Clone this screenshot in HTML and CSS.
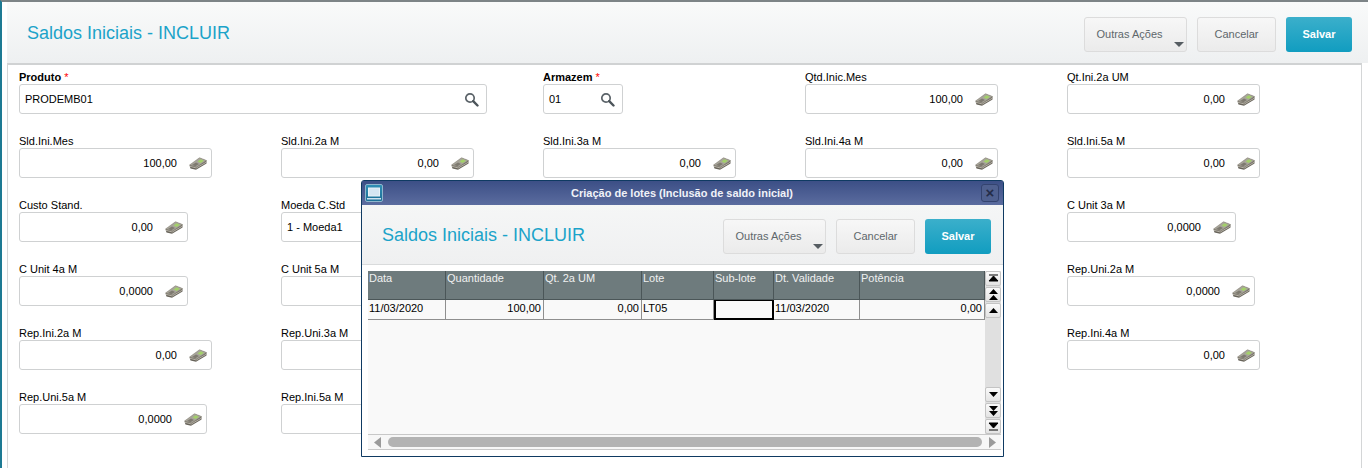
FILE: index.html
```html
<!DOCTYPE html>
<html lang="pt">
<head>
<meta charset="utf-8">
<title>Saldos Iniciais</title>
<link rel="stylesheet" href="styles.css">
</head>
<body>
<svg class="defs" width="0" height="0">
  <defs>
    <symbol id="money" viewBox="0 0 18 13">
      <path d="M0.5 8.5 L10.5 1 L17.5 3.5 L17.5 6.5 L7 12.7 L1.5 11.5 Z" fill="#67635a"/>
      <path d="M0.5 8 L10.5 0.7 L17.5 3.5 L7.5 10 Z" fill="#a8a59b" stroke="#8a867a" stroke-width=".5"/>
      <path d="M8.5 4.5 L11.5 2.3 L15 3.7 L11.7 6 Z" fill="#a3d06a"/>
      <path d="M3 8 L7 5.4 L10 6.9 L6.5 9.2 Z" fill="#7e7a70"/>
      <path d="M1 9.3 L7.3 11 L17.3 5.2" fill="none" stroke="#c9c5b9" stroke-width=".8"/>
    </symbol>
    <g id="lens">
      <circle cx="6" cy="6" r="4.2" fill="none" stroke="#5a6268" stroke-width="1.7"/>
      <path d="M9.2 9.2 L13.5 13.5" stroke="#4c545a" stroke-width="2.4" stroke-linecap="round"/>
    </g>
  </defs>
</svg>
<div class="app">
  <header class="bar">
    <h1 class="title">Saldos Iniciais - INCLUIR</h1>
    <div class="actions">
      <button class="btn btn-more">Outras Ações<i class="caret"></i></button>
      <button class="btn btn-cancel">Cancelar</button>
      <button class="btn btn-save">Salvar</button>
    </div>
  </header>
  <main class="form">
    <div class="field span2"><label class="bold">Produto <b>*</b></label><div class="box w468 left"><span>PRODEMB01</span><svg class="lens" width="15" height="15"><use href="#lens"/></svg></div></div>
    <div class="field"><label class="bold">Armazem <b>*</b></label><div class="box w80 left"><span>01</span><svg class="lens" width="15" height="15"><use href="#lens"/></svg></div></div>
    <div class="field"><label>Qtd.Inic.Mes</label><div class="box w193"><span>100,00</span><svg class="ico"><use href="#money"/></svg></div></div>
    <div class="field"><label>Qt.Ini.2a UM</label><div class="box w193"><span>0,00</span><svg class="ico"><use href="#money"/></svg></div></div>

    <div class="field"><label>Sld.Ini.Mes</label><div class="box w193"><span>100,00</span><svg class="ico"><use href="#money"/></svg></div></div>
    <div class="field"><label>Sld.Ini.2a M</label><div class="box w193"><span>0,00</span><svg class="ico"><use href="#money"/></svg></div></div>
    <div class="field"><label>Sld.Ini.3a M</label><div class="box w193"><span>0,00</span><svg class="ico"><use href="#money"/></svg></div></div>
    <div class="field"><label>Sld.Ini.4a M</label><div class="box w193"><span>0,00</span><svg class="ico"><use href="#money"/></svg></div></div>
    <div class="field"><label>Sld.Ini.5a M</label><div class="box w193"><span>0,00</span><svg class="ico"><use href="#money"/></svg></div></div>

    <div class="field"><label>Custo Stand.</label><div class="box w169"><span>0,00</span><svg class="ico"><use href="#money"/></svg></div></div>
    <div class="field"><label>Moeda C.Std</label><div class="box w193 left"><span>1 - Moeda1</span></div></div>
    <div class="field"></div>
    <div class="field"></div>
    <div class="field"><label>C Unit 3a M</label><div class="box w169"><span>0,0000</span><svg class="ico"><use href="#money"/></svg></div></div>

    <div class="field"><label>C Unit 4a M</label><div class="box w169"><span>0,0000</span><svg class="ico"><use href="#money"/></svg></div></div>
    <div class="field"><label>C Unit 5a M</label><div class="box w193"></div></div>
    <div class="field"></div>
    <div class="field"></div>
    <div class="field"><label>Rep.Uni.2a M</label><div class="box w188"><span>0,0000</span><svg class="ico"><use href="#money"/></svg></div></div>

    <div class="field"><label>Rep.Ini.2a M</label><div class="box w193"><span>0,00</span><svg class="ico"><use href="#money"/></svg></div></div>
    <div class="field"><label>Rep.Uni.3a M</label><div class="box w193"></div></div>
    <div class="field"></div>
    <div class="field"></div>
    <div class="field"><label>Rep.Ini.4a M</label><div class="box w193"><span>0,00</span><svg class="ico"><use href="#money"/></svg></div></div>

    <div class="field"><label>Rep.Uni.5a M</label><div class="box w188"><span>0,0000</span><svg class="ico"><use href="#money"/></svg></div></div>
    <div class="field"><label>Rep.Ini.5a M</label><div class="box w193"></div></div>
  </main>
</div>

<section class="dialog">
  <div class="dlg-title">
    <span class="dlg-icon"><svg width="14" height="13" viewBox="0 0 14 13"><rect x="1.5" y="1" width="11" height="8" fill="#d5e6f2" stroke="#e8f2f8"/><path d="M0 11 H14 V12.5 H0 Z" fill="#cfe2ef"/></svg></span>
    <span class="dlg-caption">Criação de lotes (Inclusão de saldo inicial)</span>
    <span class="dlg-close">×</span>
  </div>
  <div class="dlg-head">
    <h2 class="title">Saldos Iniciais - INCLUIR</h2>
    <div class="actions">
      <button class="btn btn-more">Outras Ações<i class="caret"></i></button>
      <button class="btn btn-cancel">Cancelar</button>
      <button class="btn btn-save">Salvar</button>
    </div>
  </div>
  <div class="dlg-body">
    <div class="browse">
      <div class="grid">
        <div class="th">Data</div><div class="th">Quantidade</div><div class="th">Qt. 2a UM</div><div class="th">Lote</div><div class="th">Sub-lote</div><div class="th">Dt. Validade</div><div class="th">Potência</div>
        <div class="td">11/03/2020</div><div class="td num">100,00</div><div class="td num">0,00</div><div class="td">LT05</div><div class="td focus"></div><div class="td">11/03/2020</div><div class="td num">0,00</div>
      </div>
      <div class="vscroll">
        <div class="sb-group">
          <span class="sb"><svg width="11" height="11"><path d="M1 2 H10 M5.5 3 L10 8 H1 Z" stroke="#000" fill="#000"/></svg></span>
          <span class="sb"><svg width="11" height="12"><path d="M5.5 0 L10 5 H1 Z M5.5 6 L10 11 H1 Z" fill="#000"/></svg></span>
          <span class="sb"><svg width="11" height="7"><path d="M5.5 1 L10 6 H1 Z" fill="#000"/></svg></span>
        </div>
        <div class="sb-group">
          <span class="sb"><svg width="11" height="7"><path d="M1 1 H10 L5.5 6 Z" fill="#000"/></svg></span>
          <span class="sb"><svg width="11" height="12"><path d="M1 1 H10 L5.5 6 Z M1 6 H10 L5.5 11 Z" fill="#000"/></svg></span>
          <span class="sb"><svg width="11" height="11"><path d="M1 2 H10 L5.5 7 Z M1 9 H10" stroke="#000" fill="#000"/></svg></span>
        </div>
      </div>
    </div>
    <div class="hscroll">
      <svg width="9" height="11"><path d="M8 0 V11 L1 5.5 Z" fill="#9a9a9a"/></svg>
      <div class="thumb"></div>
      <svg width="9" height="11"><path d="M1 0 V11 L8 5.5 Z" fill="#9a9a9a"/></svg>
    </div>
  </div>
</section>
</body>
</html>
```
FILE: styles.css
```css
* { box-sizing: border-box; }
html, body { margin: 0; height: 100%; }
body {
  position: relative;
  width: 1368px;
  height: 468px;
  overflow: hidden;
  background: #fff;
  font: 11px "Liberation Sans", Arial, sans-serif;
  color: #000;
}
.defs { position: absolute; }
.app {
  height: 468px;
  border-top: 2px solid #7d8487;
  border-left: 2px solid #1d7a93;
  padding-left: 5px;
  background: #fff;
}
.bar {
  height: 61px;
  padding: 15px 16px 0 20px;
  display: flex;
  justify-content: space-between;
  background: linear-gradient(#f9fafa, #eef0f1);
}
.title {
  margin: 0;
  padding-top: 4px;
  font-size: 18px;
  font-weight: 400;
  line-height: 24px;
  color: #1ba3c9;
}
.actions { display: flex; gap: 10px; }
.btn {
  height: 35px;
  padding: 0 0 2px;
  border-radius: 3px;
  font: 11px "Liberation Sans", Arial, sans-serif;
  position: relative;
  border: 1px solid #dcdcdc;
  background: linear-gradient(#f7f7f7, #ebebeb);
  color: #5e676b;
}
.btn-more { width: 103px; padding-right: 12px; }
.btn-cancel { width: 79px; }
.btn-save {
  width: 66px;
  border: 0;
  font-weight: 700;
  color: #fff;
  background: linear-gradient(#3bafcb, #119dc0);
}
.caret {
  position: absolute;
  right: 2px;
  bottom: 4px;
  border-style: solid;
  border-width: 5px 5px 0;
  border-color: #565d62 transparent transparent;
}
.form {
  height: 405px;
  width: 1355px;
  padding: 6px 0 0 11px;
  border: 1px solid #d4d6d7;
  border-top: 2px solid #d0d2d3;
  border-bottom: 0;
  display: grid;
  grid-template-columns: repeat(5, 262px);
  grid-auto-rows: 64px;
  align-content: start;
}
.span2 { grid-column: span 2; }
.field label {
  display: block;
  height: 13px;
  line-height: 13px;
}
.field label.bold { font-weight: 700; }
.field label b { color: #f00; font-weight: 400; }
.box {
  height: 30px;
  border: 1px solid #cfd1d2;
  border-radius: 3px;
  background: #fff;
  display: flex;
  align-items: center;
  justify-content: flex-end;
  padding-right: 4px;
  color: #000;
}
.box span { margin-right: 12px; }
.box.left { justify-content: space-between; padding: 0 6px 0 5px; }
.box.left span { margin: 0; }
.w468 { width: 468px; }
.w80 { width: 80px; }
.w193 { width: 193px; }
.w188 { width: 188px; }
.w169 { width: 169px; }
.ico { width: 18px; height: 13px; }
.lens { margin-right: 1px; }

.dialog {
  position: absolute;
  left: 361px;
  top: 180px;
  width: 643px;
  height: 277px;
  background: #fff;
  border: 1px solid #0f3a62;
  border-radius: 3px 3px 0 0;
  display: flex;
  flex-direction: column;
}
.dlg-title {
  height: 24px;
  flex: none;
  display: flex;
  align-items: center;
  justify-content: space-between;
  padding: 0 4px 0 3px;
  background: linear-gradient(#3c4f86, #5b6c9f);
  color: #f0f2f8;
  font-size: 11px;
  font-weight: 700;
}
.dlg-caption { flex: 1; text-align: center; }
.dlg-icon {
  width: 18px;
  height: 18px;
  display: flex;
  align-items: center;
  justify-content: center;
  background: linear-gradient(#2f8fb5, #1c6f96);
  border: 1px solid #8fb6cd;
  border-radius: 2px;
}
.dlg-close {
  width: 18px;
  height: 18px;
  text-align: center;
  line-height: 15px;
  font-size: 15px;
  font-weight: 700;
  color: #232c4a;
  background: #4f608f;
  border: 1px solid #33436f;
  border-radius: 3px;
}
.dlg-head {
  height: 60px;
  flex: none;
  display: flex;
  justify-content: space-between;
  padding: 14px 12px 0 20px;
  background: linear-gradient(#f5f6f6, #eff0f1);
  border-bottom: 1px solid #d9dbdc;
}
.dlg-body {
  flex: 1;
  padding: 6px 2px 6px 6px;
  display: flex;
  flex-direction: column;
  background: #fff;
}
.browse {
  flex: 1;
  display: flex;
  background: #f9f9f9;
}
.grid {
  flex: 1;
  display: grid;
  grid-template-columns: 78px 98px 98px 72px 60px 86px 125px;
  grid-template-rows: 29px 20px;
  align-content: start;
}
.th {
  padding: 1px;
  background: #6e7b7d;
  color: #eef0f0;
  border-right: 1px solid #4b5658;
  border-bottom: 1px solid #4b5658;
  line-height: 13px;
}
.td {
  padding: 0 2px 0 1px;
  line-height: 16px;
  background: #f9f9f9;
  border-right: 1px solid #8f8f8f;
  border-bottom: 1px solid #8f8f8f;
}
.td.num { text-align: right; }
.td.focus { border: 2px solid #000; border-top-width: 1px; }
.vscroll {
  width: 17px;
  background: #e0e0e0;
  display: flex;
  flex-direction: column;
  justify-content: space-between;
}
.sb-group { display: flex; flex-direction: column; gap: 1px; }
.sb {
  height: 15px;
  display: flex;
  align-items: center;
  justify-content: center;
  background: linear-gradient(#fafafa, #e4e4e4);
  border: 1px solid #c4c4c4;
  border-radius: 2px;
}
.hscroll {
  height: 16px;
  flex: none;
  display: flex;
  align-items: center;
  gap: 6px;
  padding: 0 4px 0 5px;
  background: #f7f7f7;
  border-top: 1px solid #c8c8c8;
  border-bottom: 1px solid #c8c8c8;
}
.thumb {
  flex: 1;
  height: 10px;
  border-radius: 5px;
  background: #b3b3b3;
}
```
